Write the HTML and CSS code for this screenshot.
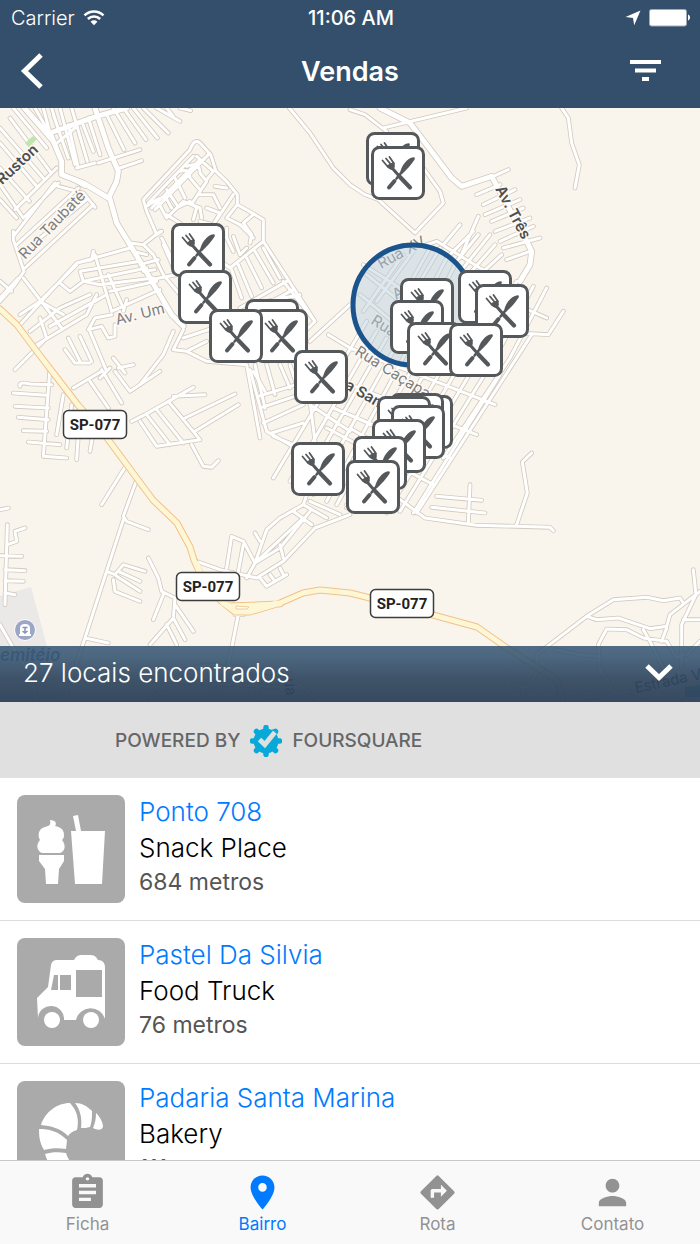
FILE: index.html
```html
<!DOCTYPE html>
<html lang="pt-BR">
<head>
<meta charset="utf-8">
<meta name="viewport" content="width=device-width, initial-scale=1">
<title>Vendas</title>
<link rel="stylesheet" href="styles.css">
</head>
<body>
<header class="top">
  <div class="status">
    <div class="status-left">
      <span>Carrier</span>
      <svg width="22" height="16" viewBox="0 0 22 16" fill="none" stroke="#fff" stroke-width="2.6" aria-hidden="true"><path d="M1.5 5.4a13.6 13.6 0 0 1 19 0M4.9 9a8.6 8.6 0 0 1 12.2 0"/><path d="M11 15.2l-3.4-3.5a4.8 4.8 0 0 1 6.8 0z" fill="#fff" stroke="none"/></svg>
    </div>
    <span class="clock">11:06 AM</span>
    <div class="status-right">
      <svg width="16" height="16" viewBox="0 0 16 16" fill="#fff" aria-hidden="true"><path d="M15.5.5L9.2 15.2 8 8 .5 7z"/></svg>
      <svg width="42" height="18" viewBox="0 0 42 18" aria-hidden="true"><rect x=".5" y=".5" width="37" height="16.500" rx="2" fill="#fff" stroke="#9fadbb"/><path d="M39 5.500v6c1.500-.6 2-1.700 2-3s-.5-2.400-2-3z" fill="#fff"/></svg>
    </div>
  </div>
  <div class="nav">
    <button class="nav-button" aria-label="Voltar"><svg width="24" height="36" viewBox="0 0 24 36" fill="none" stroke="#fff" stroke-width="5"><path d="M21 2L4.500 18 21 34"/></svg></button>
    <h1>Vendas</h1>
    <button class="nav-button nav-filter" aria-label="Filtrar"><svg width="32" height="22" viewBox="0 0 32 22" fill="#fff"><path d="M0 0h31v4H0zM5 8.500h21v4H5zM12 17h7v4h-7z"/></svg></button>
  </div>
</header>

<section class="map" aria-label="Mapa">
  <svg class="map-canvas" viewBox="0 0 700 594" preserveAspectRatio="xMidYMid slice">
    <defs>
      <g id="minor" transform="scale(.33333)">
        <path d="M40 0L140 120M70 0L165 110M105 0L148 75M130 0L150 75M0 60L130 210M30 30L150 190M0 105L110 235M0 180L88 280M0 230L70 330M0 275L50 330M160 20L205 150M155 0L180 80M180 0L225 170M215 0L262 160M245 40L280 130M265 30L300 140M230 180L285 165M205 50L235 180M320 20L372 125M340 0L405 105M370 0L438 95M400 0L472 90M430 0L505 75M470 0L540 40M500 0L520 25M540 0L572 8M295 165L420 125M360 180L425 158M45 305L170 180M70 330L175 225M50 410L235 240M60 440L260 275M75 480L280 290M165 110L225 60M40 385L165 225M40 370v25L72 490 45 530 0 580M0 570L55 510M0 520L35 550M190 200L255 235M175 235L250 255 285 298"/>
        <path d="M430 275L570 125Q585 85 605 110L632 140 648 190 680 220 712 260 712 290 765 320 790 335V400L945 640 920 665M430 275L440 310 470 380 485 370M445 285L580 145M455 300L600 155M465 305L625 140M440 295L470 275 500 330M470 275L495 265 515 300M500 245L530 290M525 210L555 270M540 190Q570 180 570 210L600 245M560 175Q600 160 600 195L620 220 580 280M590 145L640 190 620 215M500 330L550 280 600 300 605 330M500 320L540 345M530 300L570 280 590 300 580 335M600 260L640 260 660 300M645 235L680 240M700 260L640 350 600 340M620 300L660 315 640 350M680 330L712 290M680 330L720 350 760 390M760 320L730 345 755 380 750 405M790 400L690 480 670 465M700 385L720 440 740 420M680 360L680 390 700 430M790 420L840 510M765 430L820 525M740 450L785 540M715 470L755 565M695 485L725 570M860 520L720 600M880 545L760 610M750 590L900 560M850 520L945 640M480 370L430 410 390 405M430 410L460 440 490 500 540 560M485 390L515 450M490 410L530 500M400 430L440 440M420 470L475 455M430 490L465 485M450 515L530 500"/>
        <path d="M390 420L230 465 60 650M230 465L275 455 280 430M240 490L420 460M240 490L250 520 440 480M180 525L210 550 250 520 300 530 460 510M120 580L190 620M60 620L120 580 230 470M285 440L335 610M325 500L370 600M335 610L480 545M150 655L320 560M330 550L470 520M110 710L260 620 290 560M90 670L180 600 270 560M140 690L120 630M370 610L380 575M45 785L140 690M70 510L185 660M265 665L285 630 335 620M265 665L305 655 325 690 345 685 345 650M205 690L240 760M240 685L275 760M195 725L225 765 270 765M270 670L320 790M340 750L375 795M330 780L300 810M520 670L490 740 420 830M550 665L520 725 560 730 620 700M550 690L640 660M560 730L620 760 740 770M740 770L780 990M765 770L795 900M800 770L825 860M840 770L870 840M870 770L890 830M930 700L1050 590M985 680L1050 720"/>
        <path d="M1400 0L1150 60M868 0L930 75 1000 180 1050 230 1095 260 1135 275 1245 375 1330 285 1320 250 1270 180M1050 5L1095 20 1160 70M1685 0L1705 30 1715 105 1738 170 1725 240M1480 205L1525 185M1430 260L1500 230M1450 290L1545 245M1455 320L1560 275M1475 340L1570 300M1485 370L1590 330M1500 400L1600 355M1510 420L1620 390M1520 455L1590 430M1380 450L1435 325M1330 410L1380 350M1350 440L1420 370M1370 460L1435 380M1390 480L1470 380M1415 490L1485 410M1440 500L1505 440M1280 410L1310 400 1440 480 1500 510M1290 420L1200 580M1320 420L1190 640M1340 450L1220 680M1370 460L1260 680M1240 430L1130 580M1210 440L1090 610M1100 500L1350 700M1090 470L1200 540M1080 560L1250 700M1230 570L1450 740M1550 520L1450 700M1600 535L1490 740M1640 540L1530 750 1330 1050M1690 610L1645 680 1560 675M1550 590L1640 630M1595 680L1250 1215"/>
        <path d="M1050 720L1485 890M1100 640L820 1110M1130 670L870 1120M1160 690L900 1140M1190 710L940 1160M1220 730L980 1180M1260 740L1010 1190M1300 750L1040 1200M1340 760L1080 1200M1380 770L1120 1210M1420 780L1160 1215M1460 790L1200 1210M1500 800L1240 1215M1050 830L1430 980M1000 900L1350 1050M980 960L1300 1130M1050 960L1100 990M1040 1190L1180 1160 1275 1230 1430 1252 1550 1255 1650 1258 1660 1268M1310 1165L1445 1177M1295 1198L1455 1215M1410 1130L1405 1245M1550 1250L1582 1155 1567 1062 1595 1035M775 865L905 825M780 900L900 860M790 945L910 890M815 975L910 945M820 985L880 1010M750 785L800 970 870 1010M760 790L795 850M930 880L945 1000M930 890L1050 970"/>
        <path d="M150 780L130 1045 200 1050M40 855L140 862M45 895L145 900M55 928L145 935M70 968L140 970M85 1002L180 1010M60 835Q55 820 90 828L155 830M190 860L170 980M215 890L200 1020M240 910L230 1055M280 970L270 1030M220 840L305 790M270 820L325 900M305 785L365 885M345 790L390 850 480 790M355 780L400 770M395 940L435 920 580 838M420 940L470 1015 600 995 505 880M440 920L510 1010M470 905L550 1005M520 865L615 860M555 930L705 858M585 970L715 890M575 1010L610 1075 635 1078 655 1058M380 1070L305 1190M410 1115L370 1225 380 1240 445 1265M370 1235L255 1590M320 1390L345 1400 370 1370 435 1390M355 1390L420 1420M350 1405L420 1450M340 1415L345 1450 420 1480M445 1350L475 1410 485 1450 525 1470 520 1530 450 1610M490 1460L460 1535M525 1490L580 1570M520 1530L555 1595M500 1550L530 1610M590 1360L660 1385 770 1410 850 1360 945 1260 1050 1220M680 1380L695 1285 730 1300 765 1365 800 1265 840 1230 910 1190 920 1160M765 1275L780 1300M715 1390L730 1310M765 1365L840 1320 930 1210M740 1410L765 1365 910 1230M880 1210L935 1250M910 1190L980 1230M930 1180L1020 1220M840 1310L850 1350M780 1410L800 1435 860 1400M810 1400L825 1420M840 1380L850 1400M705 1520L730 1520M715 1520L685 1670 760 1690M0 1205L25 1200M22 1250L15 1490M22 1310L50 1300 45 1270 75 1260M0 1343L65 1345M15 1385L75 1388M15 1418L70 1420M15 1455L45 1460M0 1550L40 1620 90 1700 110 1782M255 1590L325 1605M255 1590L190 1782M450 1782L530 1690 620 1670 860 1700 960 1782M500 1720L900 1740M620 1670L650 1782M760 1690L780 1782M450 1770L960 1770"/>
        <path d="M1610 1680V1640L1760 1525 1840 1475 1940 1468 1990 1478 2040 1470 2050 1485M1760 1525L1790 1535 1855 1530 1950 1562 2000 1555 2010 1520 2100 1450M2080 1385L2088 1460 2045 1550 2045 1680M2050 1535H2100M1800 1700L1795 1610 1820 1563 1880 1565 1930 1590 2000 1600 2030 1650 2050 1640M1930 1565L1950 1600 1990 1680M1985 1600L2000 1560M1665 1625L1740 1640 1800 1645M1800 1680L1840 1750 1940 1780M1540 1730L1580 1740 1620 1680M1570 1782V1730M2060 1640L2100 1600M1650 1740L1770 1770 1890 1750"/>
      </g>
      <g id="major" transform="scale(.33333)">
        <path d="M285 0L325 120 355 190 350 220 328 265 350 345 390 410 450 510 515 620 550 655M145 80L60 -15M150 75L290 25 380 0M150 75L185 160 185 200 250 225 325 270M1140 0L1230 45 1280 110 1355 210 1385 235 1475 205 1510 270 1570 380 1595 430 1590 470 1560 520"/>
      </g>
      <path id="highway" d="M0 201L17 217 38 245 78 297 107 330 127 357 153 392 177 415 190 439 194 452 200 465 220 492 235 504 250 504 280 495 303 485 320 482 350 485 370 490 433 507 477 519 507 540 535 558 557 572 563 594M230 498L280 496"/>
      <symbol id="pin" viewBox="0 0 54 54">
        <rect x="1.500" y="1.500" width="51" height="51" rx="7" fill="#fff" stroke="#55585b" stroke-width="3"/>
        <g fill="none" stroke="#55585b" stroke-linecap="round">
          <path stroke-width="3" d="M22 23L29 31"/><path stroke-width="4.200" d="M29 31L39 41.500"/>
          <path stroke-width="4" d="M18 41.500L23.500 35"/><path stroke-width="2.600" d="M25.500 32.500L30 27"/>
          <path stroke-width="1.800" d="M11.500 14.500L17 21M15 12.500L20 18.500M18.500 11L23 17.500"/>
        </g>
        <path fill="#55585b" d="M15.500 19.500L22.500 16c2 3 1.700 6-.3 7.500s-5.200-.8-6.700-4zM29 27.500C30 20 36 12 42.500 11.200c1.700 0 1.800 1.600.6 3-3.600 5.700-7 8.800-12.300 14z"/>
      </symbol>
      <g id="shield"><rect x=".5" y=".5" width="63" height="28" rx="5" fill="#fff" stroke="#3c3c3c" stroke-width="1.500"/><text class="shield-text" x="32" y="20">SP-077</text></g>
    </defs>
    <rect width="700" height="594" fill="#f9f5ed"/>
    <path d="M0 488L31 479 62 594H0z" fill="#eae9e7"/>
    <path d="M685 579l15-2v12h-15z" fill="#5ac0dd"/>
    <use href="#minor" class="minor-edge"/><use href="#major" class="major-edge"/>
    <use href="#minor" class="minor-fill"/><use href="#major" class="major-fill"/>
    <path d="M25 35L33 28 37 31 29 39z" fill="#bde6ad"/>
    <use href="#highway" class="highway-edge"/><use href="#highway" class="highway-fill"/>
    <path d="M196 454L204 476M222 494L236 503 258 501 278 495" stroke="#fdf7d5" stroke-width="6" fill="none"/>
    <path d="M236 498L249 499 247 501H236z" fill="#fff" stroke="#f1ca98"/>
    <g class="road-label">
      <text class="strong" transform="translate(-4 83) rotate(-43)">. Ruston</text>
      <text transform="translate(25 152) rotate(-46)">Rua Taubaté</text>
      <text transform="translate(117 217) rotate(-14)">Av. Um</text>
      <text class="strong" transform="translate(495 81) rotate(62)">Av. Três</text>
      <text transform="translate(381 161) rotate(-28)">Rua XV</text>
      <text transform="translate(396 192) rotate(-30)">Av</text>
      <text transform="translate(370 215) rotate(33)">Rua</text>
      <text transform="translate(354 246) rotate(32)">Rua Caçapava</text>
      <text class="strong" transform="translate(344 280) rotate(30)">a San</text>
      <text class="faint" transform="translate(284 571) rotate(82)">ua</text>
      <text class="faint" transform="translate(636 585) rotate(-12)">Estrada V</text>
    </g>
    <circle cx="413" cy="197" r="60" fill="#b9cfdd" fill-opacity=".48" stroke="#1b548c" stroke-width="5"/>
    <circle cx="25" cy="522" r="10.500" fill="#9ca7c6" stroke="#fff" stroke-width="1"/>
    <path d="M20 526v-6q0-4 5-4t5 4v6h1v2H19v-2z" fill="#fff"/><path d="M25 520v6M22.500 519.500h5M22.500 523l2.500 2 2.500-2" stroke="#8793ba" stroke-width="1.500" fill="none"/>
    <text class="place-label" x="0" y="553">emitéio</text>
    <use href="#shield" x="63" y="302"/><use href="#shield" x="176" y="464"/><use href="#shield" x="370" y="481"/>
    <use href="#pin" x="366" y="24" width="54" height="54"/><use href="#pin" x="371" y="38" width="54" height="54"/>
    <use href="#pin" x="171" y="115" width="54" height="54"/><use href="#pin" x="178" y="162" width="54" height="54"/>
    <use href="#pin" x="245" y="191" width="54" height="54"/><use href="#pin" x="254" y="201" width="54" height="54"/><use href="#pin" x="209" y="201" width="54" height="54"/>
    <use href="#pin" x="294" y="242" width="54" height="54"/>
    <use href="#pin" x="458" y="162" width="54" height="54"/><use href="#pin" x="475" y="176" width="54" height="54"/>
    <use href="#pin" x="400" y="170" width="54" height="54"/><use href="#pin" x="390" y="192" width="54" height="54"/>
    <use href="#pin" x="407" y="214" width="54" height="54"/><use href="#pin" x="449" y="215" width="54" height="54"/>
    <use href="#pin" x="399" y="287" width="54" height="54"/><use href="#pin" x="390" y="285" width="54" height="54"/><use href="#pin" x="377" y="288" width="54" height="54"/>
    <use href="#pin" x="391" y="297" width="54" height="54"/><use href="#pin" x="372" y="311" width="54" height="54"/><use href="#pin" x="353" y="328" width="54" height="54"/><use href="#pin" x="346" y="352" width="54" height="54"/>
    <use href="#pin" x="291" y="334" width="54" height="54"/>
  </svg>
  <button class="results">
    <span>27 locais encontrados</span>
    <svg width="28" height="18" viewBox="0 0 28 18" fill="none" stroke="#fff" stroke-width="5" aria-hidden="true"><path d="M2 2L14 13.500 26 2"/></svg>
  </button>
</section>

<div class="powered">
  <span>POWERED BY</span>
  <svg width="32" height="32" viewBox="0 0 32 32" aria-hidden="true">
    <circle cx="16" cy="16" r="12.500" fill="#08a9d8"/>
    <path d="M16 2.500v27M2.500 16h27M6.500 6.500l19 19M25.500 6.500l-19 19" stroke="#08a9d8" stroke-width="5.500" stroke-linecap="round"/>
    <path d="M9.500 14.500l5.300 5L25.500 6.500" fill="none" stroke="#e0e0e0" stroke-width="5"/><path d="M22.500 4.500l5 4" stroke="#08a9d8" stroke-width="1.500"/>
  </svg>
  <span>FOURSQUARE</span>
</div>

<main class="places">
  <a class="place" href="#">
    <svg class="thumb" viewBox="0 0 108 108" aria-hidden="true"><g fill="#fff"><path d="M33 25c6 0 7 4 5 6 6 1 9 4 9 9 0 3-1 4-2 5 4 5 3 10 0 12q-1 1-3 1H26q-2 0-3-1c-3-3-4-7 0-12-3-5-1-12 5-13 5-1 6-3 5-7zM22 60h25v6l-5 8-1 15H29l-1-15-6-8zM56 21l5-1 3 16h24l-3 53H58l-4-53h5z"/></g></svg>
    <div class="info"><h2>Ponto 708</h2><p class="kind">Snack Place</p><p class="distance">684 metros</p></div>
  </a>
  <a class="place" href="#">
    <svg class="thumb" viewBox="0 0 108 108" aria-hidden="true"><path fill="#fff" d="M20 60l11-11 3-22q1-5 6-5h17l2-3q2-2 5-2h10q3 0 5 2l2 3q7 0 7 8v51a15 15 0 0 0-29 1H47a13 13 0 0 0-26-2z"/><path fill="#aaa" d="M37 37h4v15h-7zM43 37h11v15H43zM59 32h26v27H59z"/><circle cx="35" cy="82" r="8" fill="#fff"/><circle cx="74" cy="82" r="8" fill="#fff"/></svg>
    <div class="info"><h2>Pastel Da Silvia</h2><p class="kind">Food Truck</p><p class="distance">76 metros</p></div>
  </a>
  <a class="place" href="#">
    <svg class="thumb" viewBox="0 0 108 108" aria-hidden="true"><path fill="#fff" d="M24 44C28 31 40 22 53 22c8 9 9 17 7 27-4 1-7 3-9 6-8-8-17-10-27-11zM58 22c7 0 12 3 17 8 0 7 0 10-2 16-3 1-6 1-9 1 1-9 0-17-6-25zM79 32c5 5 7 10 7 14-2 4-6 3-10 1 2-5 3-9 3-15zM22 48c10 0 19 2 28 11l-1 9c-8-1-14-1-22 1-4-7-5-12-5-21zM28 73c7-2 13-2 21-1 2 7 7 13 14 16l-5 12c-15-4-26-13-30-27z"/></svg>
    <div class="info"><h2>Padaria Santa Marina</h2><p class="kind">Bakery</p><p class="distance">111 metros</p></div>
  </a>
</main>

<nav class="tabs">
  <a class="tab" href="#"><svg viewBox="0 0 24 24"><path d="M19 3h-4.180C14.400 1.840 13.300 1 12 1c-1.300 0-2.400.84-2.820 2H5c-1.100 0-2 .9-2 2v14c0 1.100.9 2 2 2h14c1.100 0 2-.9 2-2V5c0-1.100-.9-2-2-2zm-7 0c.55 0 1 .45 1 1s-.45 1-1 1-1-.45-1-1 .45-1 1-1zm2 14H7v-2h7v2zm3-4H7v-2h10v2zm0-4H7V7h10v2z"/></svg><span>Ficha</span></a>
  <a class="tab active" href="#" aria-current="page"><svg viewBox="0 0 24 24"><path d="M12 2C8.130 2 5 5.130 5 9c0 5.250 7 13 7 13s7-7.750 7-13c0-3.870-3.130-7-7-7zm0 9.500c-1.380 0-2.500-1.120-2.500-2.500s1.120-2.500 2.500-2.500 2.500 1.120 2.500 2.500-1.120 2.500-2.500 2.500z"/></svg><span>Bairro</span></a>
  <a class="tab" href="#"><svg viewBox="0 0 24 24"><path d="M21.710 11.290l-9-9a.996.996 0 0 0-1.410 0l-9 9a.996.996 0 0 0 0 1.410l9 9c.39.39 1.020.39 1.410 0l9-9a.996.996 0 0 0 0-1.410zM14 14.500V12h-4v3H8v-4c0-.55.45-1 1-1h5V7.500l3.500 3.500-3.500 3.500z"/></svg><span>Rota</span></a>
  <a class="tab" href="#"><svg viewBox="0 0 24 24"><path d="M12 12c2.210 0 4-1.790 4-4s-1.790-4-4-4-4 1.790-4 4 1.790 4 4 4zm0 2c-2.670 0-8 1.340-8 4v2h16v-2c0-2.660-5.330-4-8-4z"/></svg><span>Contato</span></a>
</nav>
</body>
</html>
```
FILE: styles.css
```css
* { box-sizing: border-box; }

body {
  margin: 0;
  height: 100vh;
  display: flex;
  flex-direction: column;
  background: #fff;
  color: #000;
  font-family: Inter, "Liberation Sans", sans-serif;
}

h1, h2, p { margin: 0; font-weight: inherit; }
button { border: 0; padding: 0; background: none; color: inherit; font: inherit; }
a { color: inherit; text-decoration: none; }
svg { display: block; flex: none; }

.top { flex: none; background: #344f6b; color: #fff; }

.status {
  display: grid;
  grid-template-columns: 1fr auto 1fr;
  align-items: center;
  height: 36px;
  padding: 0 9px 0 11px;
  font-size: 20px;
}
.status-left, .status-right { display: flex; align-items: center; gap: 8px; }
.status-left { font-weight: 300; }
.status-right { justify-content: flex-end; }
.clock { font-weight: 500; }

.nav {
  display: grid;
  grid-template-columns: 1fr auto 1fr;
  align-items: center;
  height: 72px;
  padding: 0 38px 2px 20px;
}
.nav h1 { padding-left: 18px; font-size: 27px; font-weight: 600; }
.nav-button { justify-self: start; }
.nav-filter { justify-self: end; }

.map { position: relative; flex: none; aspect-ratio: 700 / 594; overflow: hidden; }
.map-canvas { width: 100%; height: 100%; }
.minor-edge, .minor-fill, .major-edge, .major-fill, .highway-edge, .highway-fill {
  fill: none;
  stroke-linecap: round;
  stroke-linejoin: round;
}
.minor-edge { stroke: #d3cabf; stroke-width: 14px; }
.minor-fill { stroke: #fff; stroke-width: 9px; }
.major-edge { stroke: #d3cabf; stroke-width: 20px; }
.major-fill { stroke: #fff; stroke-width: 15px; }
.highway-edge { stroke: #f3c08a; stroke-width: 7px; }
.highway-fill { stroke: #fdf7d5; stroke-width: 5px; }

.road-label {
  font-size: 15px;
  fill: #7d7d7d;
  stroke: #fcf9f4;
  stroke-width: 3px;
  paint-order: stroke;
}
.road-label .strong { font-weight: 600; fill: #4d4d4f; }
.road-label .faint { fill: #333; stroke: none; }
.place-label { font-size: 17px; font-weight: 600; font-style: italic; fill: #5f74b0; }
.shield-text {
  font-family: "Liberation Sans Narrow", Roboto, sans-serif;
  font-size: 15px;
  font-weight: 700;
  text-anchor: middle;
  fill: #222;
}

.results {
  position: absolute;
  left: 0;
  right: 0;
  bottom: 0;
  display: flex;
  align-items: center;
  justify-content: space-between;
  height: 56px;
  padding: 0 27px 3px 23px;
  background: linear-gradient(rgba(52, 84, 113, .86), rgba(52, 84, 113, .88) 18%, rgba(48, 70, 94, .93) 60%, rgba(46, 66, 90, .96));
  color: #fff;
  font-size: 26px;
  font-weight: 300;
}

.powered {
  flex: none;
  display: flex;
  align-items: center;
  gap: 10px;
  height: 76px;
  padding: 1px 0 0 115px;
  background: #e0e0e0;
  color: #666;
  font-size: 19px;
  font-weight: 500;
}

.places { flex: 1; min-height: 0; overflow-y: auto; scrollbar-width: none; }
.place {
  display: flex;
  gap: 14px;
  padding: 17px;
  border-bottom: 1px solid #dcdcdc;
}
.thumb { width: 108px; height: 108px; border-radius: 8px; background: #aaa; }
.info { min-width: 0; font-size: 26px; font-weight: 300; }
.info h2 { color: #007aff; font-size: 26px; line-height: 34px; }
.kind { line-height: 38px; }
.distance { color: #555; font-size: 23px; font-weight: 400; line-height: 30px; }

.tabs {
  flex: none;
  display: grid;
  grid-template-columns: repeat(4, 1fr);
  height: 84px;
  border-top: 1px solid #c8c8c8;
  background: #f9f9f9;
}
.tab {
  display: flex;
  flex-direction: column;
  align-items: center;
  padding-top: 11px;
  color: #929292;
  font-size: 17px;
  line-height: 22px;
}
.tab svg { width: 41px; height: 41px; fill: currentColor; }
.active { color: #007aff; }
```
